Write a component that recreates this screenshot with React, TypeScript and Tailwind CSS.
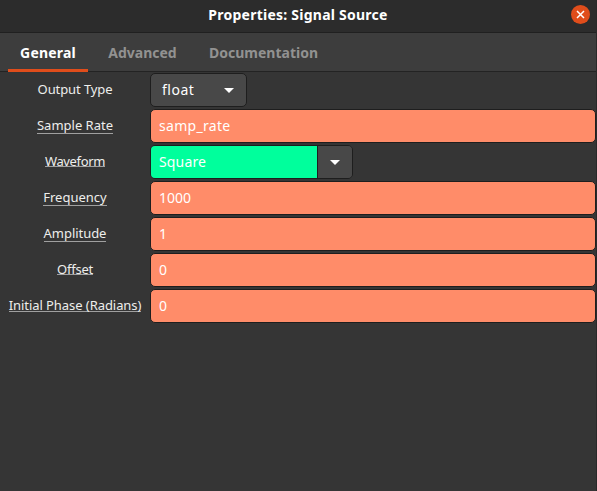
import type { ReactNode } from 'react';

const Caret = () => (
  <svg width="10" height="5" viewBox="0 0 10 5" className="shrink-0">
    <path d="M0 0h10L5 5z" fill="#fff" />
  </svg>
);

function Label({ text, tracking = '', line = '' }: { text: string; tracking?: string; line?: string }) {
  return (
    <div className="flex h-[34px] w-[149px] shrink-0 justify-center pl-px pt-[7px]">
      <span className={`whitespace-nowrap text-[13px] leading-[18px] text-[#eeeeec] ${tracking} ${line}`}>{text}</span>
    </div>
  );
}

function Row({ label, children }: { label: ReactNode; children: ReactNode }) {
  return (
    <div className="flex h-[34px] items-center gap-px">
      {label}
      {children}
    </div>
  );
}

function Entry({ value, tracking = '' }: { value: string; tracking?: string }) {
  return (
    <div className={`flex h-[34px] grow items-center rounded-[5px] border border-[#1e1e1e] bg-[#ff8c69] pl-2 text-sm text-white ${tracking}`}>
      {value}
    </div>
  );
}

const low = 'h-[18px] border-b border-[#a0a0a0]';
const high = 'h-[15px] border-b border-[#a0a0a0]';

export default function App() {
  return (
    <div className="flex h-[491px] w-[597px] flex-col overflow-hidden border-r border-[#292929] bg-[#353535] font-['Noto_Sans','Open_Sans',sans-serif]">
      <header className="flex h-[33px] shrink-0 items-center border-b border-[#202020] bg-[#2c2c2c] pb-[3px]">
        <h1 className="grow pl-[25px] text-center text-sm font-bold tracking-[0.24px] text-white">Properties: Signal Source</h1>
        <button className="mr-[6px] flex size-[19px] items-center justify-center rounded-full bg-[#e04d1b]">
          <svg width="9" height="9" viewBox="0 0 9 9">
            <path d="M1 1l7 7M8 1L1 8" stroke="#fff" strokeWidth="1.5" />
          </svg>
        </button>
      </header>
      <nav className="flex h-[39px] shrink-0 border-b border-[#232323] bg-[#3d3d3d] pl-2 text-sm font-bold text-[#929291]">
        <div className="flex h-[39px] w-20 items-center justify-center border-b-3 border-[#e04d1b] pt-1 tracking-[0.2px] text-white">General</div>
        <div className="flex w-[109px] items-center justify-center pt-px">Advanced</div>
        <div className="flex w-[133px] items-center justify-center pt-px">Documentation</div>
      </nav>
      <main className="flex flex-col gap-0.5 pt-px">
        <Row label={<Label text="Output Type" tracking="tracking-[-0.1px]" />}>
          <button className="flex h-[34px] w-[97px] items-center justify-between rounded-[5px] border border-[#1e1e1e] bg-[#484848] pl-[11px] pr-3 text-sm text-white">
            <span className="tracking-[0.5px]">float</span>
            <Caret />
          </button>
        </Row>
        <Row label={<Label text="Sample Rate" line={low} />}>
          <Entry value="samp_rate" tracking="tracking-[0.3px]" />
        </Row>
        <Row label={<Label text="Waveform" tracking="tracking-[-0.35px]" line={high} />}>
          <div className="flex h-[34px] w-[203px] overflow-hidden rounded-[5px] border border-[#1e1e1e] text-sm text-white">
            <div className="flex w-[166px] items-center bg-[#00ff9c] pl-2 tracking-[0.15px]">Square</div>
            <div className="flex grow items-center justify-center border-l border-[#1e1e1e] bg-[#484848]">
              <Caret />
            </div>
          </div>
        </Row>
        <Row label={<Label text="Frequency" line={low} />}>
          <Entry value="1000" />
        </Row>
        <Row label={<Label text="Amplitude" tracking="tracking-[-0.05px]" line={low} />}>
          <Entry value="1" />
        </Row>
        <Row label={<Label text="Offset" tracking="tracking-[-0.25px]" line={high} />}>
          <Entry value="0" />
        </Row>
        <Row label={<Label text="Initial Phase (Radians)" tracking="tracking-[-0.06px]" line="h-4 border-b border-[#a0a0a0]" />}>
          <Entry value="0" />
        </Row>
      </main>
    </div>
  );
}
